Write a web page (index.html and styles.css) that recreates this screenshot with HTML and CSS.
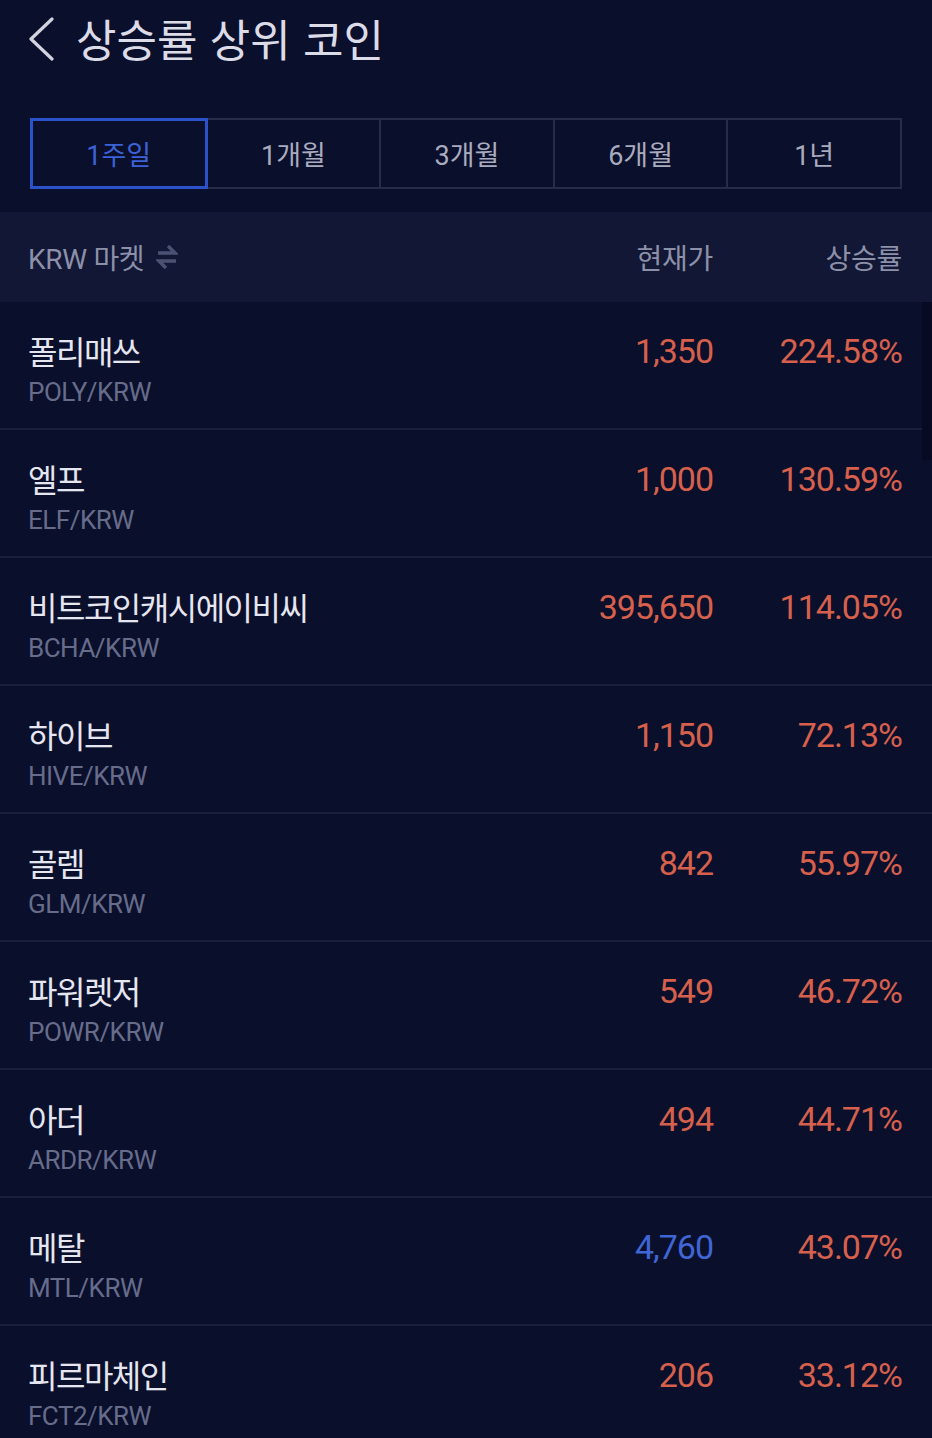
FILE: index.html
```html
<!DOCTYPE html>
<html lang="ko">
<head>
<meta charset="utf-8">
<title>상승률 상위 코인</title>
<link rel="stylesheet" href="styles.css">
</head>
<body>
<div class="screen">
  <header class="topbar">
    <svg class="back" width="30" height="44" viewBox="0 0 30 44"><path d="M26 2 L5 22 L26 42" fill="none" stroke="#d2d3df" stroke-width="3.2" stroke-linecap="round" stroke-linejoin="round"/></svg>
    <h1 class="title">상승률 상위 코인</h1>
  </header>

  <nav class="tabs">
    <div class="tab active">1주일</div>
    <div class="tab">1개월</div>
    <div class="tab">3개월</div>
    <div class="tab">6개월</div>
    <div class="tab">1년</div>
  </nav>

  <div class="thead">
    <div class="th market">KRW 마켓
      <svg class="swap" width="22" height="30" viewBox="0 0 22 30"><path d="M2 11 H19 L12 4" fill="none" stroke="#4b5172" stroke-width="3.4" stroke-linejoin="miter"/><path d="M20 19 H3 L10 26" fill="none" stroke="#4b5172" stroke-width="3.4" stroke-linejoin="miter"/></svg>
    </div>
    <div class="th right">현재가</div>
    <div class="th right">상승률</div>
  </div>

  <div class="list">
    <div class="scrollbar"></div>
    <div class="row"><div class="coin"><div class="name">폴리매쓰</div><div class="sym">POLY/KRW</div></div><div class="price up">1,350</div><div class="pct up">224.58%</div></div>
    <div class="row"><div class="coin"><div class="name">엘프</div><div class="sym">ELF/KRW</div></div><div class="price up">1,000</div><div class="pct up">130.59%</div></div>
    <div class="row"><div class="coin"><div class="name">비트코인캐시에이비씨</div><div class="sym">BCHA/KRW</div></div><div class="price up">395,650</div><div class="pct up">114.05%</div></div>
    <div class="row"><div class="coin"><div class="name">하이브</div><div class="sym">HIVE/KRW</div></div><div class="price up">1,150</div><div class="pct up">72.13%</div></div>
    <div class="row"><div class="coin"><div class="name">골렘</div><div class="sym">GLM/KRW</div></div><div class="price up">842</div><div class="pct up">55.97%</div></div>
    <div class="row"><div class="coin"><div class="name">파워렛저</div><div class="sym">POWR/KRW</div></div><div class="price up">549</div><div class="pct up">46.72%</div></div>
    <div class="row"><div class="coin"><div class="name">아더</div><div class="sym">ARDR/KRW</div></div><div class="price up">494</div><div class="pct up">44.71%</div></div>
    <div class="row"><div class="coin"><div class="name">메탈</div><div class="sym">MTL/KRW</div></div><div class="price down">4,760</div><div class="pct up">43.07%</div></div>
    <div class="row"><div class="coin"><div class="name">피르마체인</div><div class="sym">FCT2/KRW</div></div><div class="price up">206</div><div class="pct up">33.12%</div></div>
  </div>
</div>
</body>
</html>
```

FILE: styles.css
```css
html, body {
  margin: 0;
  padding: 0;
  background: #0a0f2b;
}
body {
  font-family: Roboto, "Noto Sans CJK KR", sans-serif;
  color: #e4e4ee;
}
.screen {
  width: 932px;
  height: 1438px;
  overflow: hidden;
  background: #0a0f2b;
}
.topbar {
  height: 76px;
  display: flex;
  align-items: center;
  padding-left: 26px;
  gap: 20px;
}
.back {
  display: block;
  margin-top: 2px;
}
.title {
  margin: 0;
  font-family: "Noto Sans CJK KR", sans-serif;
  font-weight: 400;
  font-size: 44px;
  letter-spacing: 0;
  color: #dcdce8;
  line-height: 1;
}
.tabs {
  display: flex;
  margin: 42px 30px 0 30px;
  height: 71px;
}
.tab {
  flex: 1;
  display: flex;
  align-items: center;
  justify-content: center;
  border: 2px solid #262c4a;
  border-left: none;
  font-family: Roboto, "Noto Sans CJK KR", sans-serif;
  font-size: 27px;
  letter-spacing: 0;
  color: #a9abbf;
}
.tab:first-child {
  border-left: 2px solid #262c4a;
}
.tab.active {
  border: 3px solid #2b52c9;
  color: #3b62d6;
}
.thead {
  margin-top: 23px;
  height: 90px;
  background: #111734;
  display: grid;
  grid-template-columns: 1fr 200px 189px;
  align-items: center;
  padding: 0 30px 0 28px;
}
.th {
  font-size: 28px;
  letter-spacing: -0.3px;
  color: #8d90a9;
}
.th.right {
  text-align: right;
}
.market {
  display: flex;
  align-items: center;
  gap: 12px;
}
.swap {
  display: block;
}
.list {
  position: relative;
}
.scrollbar {
  position: absolute;
  right: 0;
  top: 0;
  width: 10px;
  height: 158px;
  background: #070a22;
}
.row {
  height: 126px;
  border-bottom: 2px solid #181e3c;
  display: grid;
  grid-template-columns: 1fr 200px 189px;
  padding: 0 30px 0 28px;
  align-items: start;
}
.coin {
  padding-top: 28px;
}
.name {
  font-family: "Noto Sans CJK KR", sans-serif;
  font-size: 32px;
  letter-spacing: -1.5px;
  line-height: 40px;
  color: #e6e6f0;
}
.sym {
  font-size: 26px;
  letter-spacing: -0.5px;
  line-height: 30px;
  margin-top: 7px;
  color: #676c8b;
}
.price, .pct {
  padding-top: 29px;
  text-align: right;
  font-size: 34px;
  letter-spacing: -1px;
  line-height: 40px;
}
.up {
  color: #d6604b;
}
.down {
  color: #3f66d4;
}
```
